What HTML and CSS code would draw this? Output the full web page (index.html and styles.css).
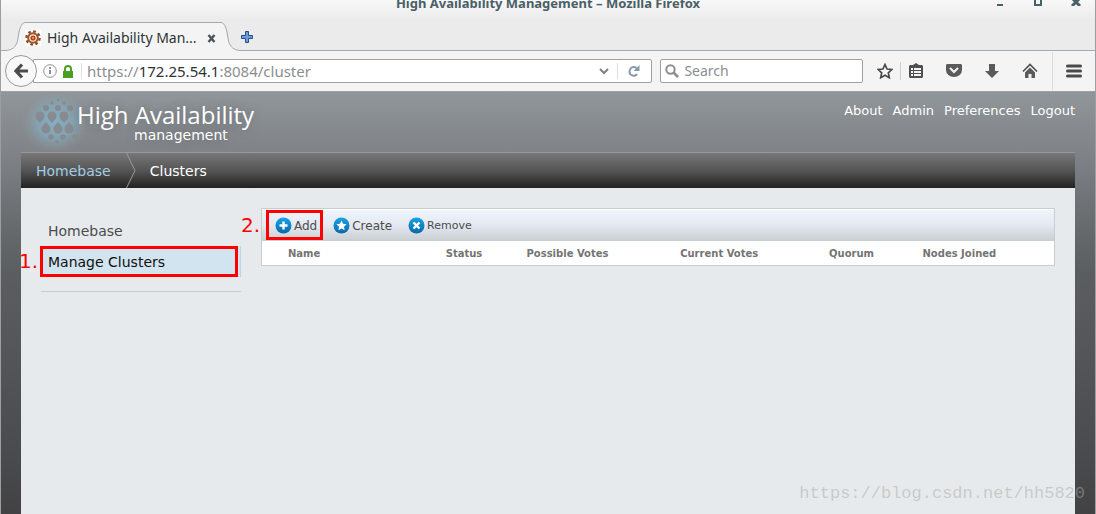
FILE: index.html
```
<!DOCTYPE html>
<html lang="en">
<head>
	<meta charset="utf-8">
	<title>High Availability Management</title>
	<link rel="stylesheet" href="styles.css">
</head>
<body>
	<div class="window">
		<div class="titlebar">
			<div class="window-title">High Availability Management – Mozilla Firefox</div>
			<div class="window-buttons">
				<button aria-label="Minimize"><svg width="10" height="12"><path d="M2 10h6v2H2z" fill="#4a5f67"/></svg></button>
				<button aria-label="Maximize"><svg width="10" height="12"><path d="M2 2h6v9H2z" fill="none" stroke="#4a5f67" stroke-width="2"/></svg></button>
				<button aria-label="Close"><svg width="10" height="12"><path d="M1 4l8 8M9 4l-8 8" stroke="#4a5f67" stroke-width="3"/></svg></button>
			</div>
		</div>

		<div class="tabs">
			<svg class="tab-edge" width="20" height="29" viewBox="0 0 20 29"><path d="M0 29V28.500C7 28.500 11 25 12.500 19L14.500 10C16 4 17 .5 20 .5V29z" fill="#f4f4f4"/><path d="M0 28.500C7 28.500 11 25 12.500 19L14 10C15.500 4 17 1 20 .5" fill="none" stroke="#a3aab0"/></svg>
			<div class="tab">
				<svg class="favicon" width="16" height="16" viewBox="0 0 16 16">
					<path d="M0 0h16v16H0z" fill="#fff"/>
					<circle cx="8" cy="8" r="6.600" fill="none" stroke="#8a4a26" stroke-width="2.400" stroke-dasharray="2.700 2.480"/>
					<circle cx="8" cy="8" r="4.800" fill="#fbe9dd" stroke="#95552f" stroke-width="2"/>
					<circle cx="8" cy="8" r="2.600" fill="#c3410d"/>
					<circle cx="8" cy="8" r="1" fill="#f6a05a"/>
				</svg>
				<span class="tab-text">High Availability Man...</span>
				<button aria-label="Close tab"><svg width="9" height="9"><path d="M1.500 1l6 7M7.500 1l-6 7" stroke="#4d5357" stroke-width="2.400"/></svg></button>
			</div>
			<svg class="tab-edge" width="20" height="29" viewBox="0 0 20 29"><path d="M20 29V28.500C13 28.500 9 25 7.500 19L5.500 10C4 4 3 .5 0 .5V29z" fill="#f4f4f4"/><path d="M20 28.500C13 28.500 9 25 7.500 19L6 10C4.500 4 3 1 0 .5" fill="none" stroke="#a3aab0"/></svg>
			<button class="new-tab" aria-label="New tab"><svg width="12" height="12"><path d="M4.500 .5h3v4h4v3h-4v4h-3v-4h-4v-3h4z" fill="#6f9bd8" stroke="#264d8c"/></svg></button>
		</div>

		<div class="navbar">
			<button class="back" aria-label="Back"><svg width="15" height="16" viewBox="0 0 15 16"><path d="M8 1.500L2 8l6 6.500M2.500 8H14" fill="none" stroke="#4b4b4b" stroke-width="3.200"/></svg></button>
			<div class="urlbar">
				<svg width="14" height="14" viewBox="0 0 14 14"><circle cx="7" cy="7" r="6.300" fill="none" stroke="#919191"/><path d="M6 6h2v4H6zM6 3h2v2H6z" fill="#919191"/></svg>
				<svg class="lock" width="10" height="13" viewBox="0 0 10 13"><path d="M0 6h10v7H0z" fill="#4a9e22"/><path d="M2 7V4a3 3 0 0 1 6 0v3" fill="none" stroke="#4a9e22" stroke-width="2"/></svg>
				<span class="url">https://<b>172.25.54.1</b>:8084/cluster</span>
				<svg class="chevron" width="10" height="7" viewBox="0 0 10 7"><path d="M1 1l4 4 4-4" fill="none" stroke="#818181" stroke-width="2"/></svg>
				<button class="reload" aria-label="Reload"><svg width="12" height="12" viewBox="0 0 12 12"><path d="M8.500 3C5 .5 1.500 3 1.500 6.500c0 4.500 6 5.500 7.500 2.500" fill="none" stroke="#8798a8" stroke-width="2"/><path d="M11.500 0v6h-6z" fill="#8798a8"/></svg></button>
			</div>
			<label class="search">
				<svg width="14" height="14" viewBox="0 0 14 14"><circle cx="5.500" cy="5.500" r="4.200" fill="none" stroke="#8e8e8e" stroke-width="2"/><path d="M8.500 8.500L13 13" stroke="#8e8e8e" stroke-width="2.600"/></svg>
				<input type="text" placeholder="Search" aria-label="Search">
			</label>
			<div class="tools">
				<button aria-label="Bookmark this page"><svg width="16" height="16" viewBox="0 0 16 16"><path d="M8 1.500l2 4.500 4.800.5-3.500 3.300 1 4.900L8 12.200l-4.300 2.500 1-4.900L1.200 6.500 6 6z" fill="#fafafa" stroke="#4a4a4a" stroke-width="1.700"/></svg></button>
				<button class="divided" aria-label="Bookmarks"><svg width="16" height="16" viewBox="0 0 16 16"><path d="M5 2l3-2 3 2h3l1 1v11l-1 1H2l-1-1V3l1-1z" fill="#505050"/><path d="M3 5h2v2H3zM6 5h7v2H6zM3 8h2v2H3zM6 8h7v2H6zM3 11h2v2H3zM6 11h7v2H6z" fill="#f4f4f4"/></svg></button>
				<button aria-label="Pocket"><svg width="16" height="16" viewBox="0 0 16 16"><path d="M0 2l1-1h14l1 1v5a8 7 0 0 1-16 0z" fill="#5a5a5a"/><path d="M4 5l4 4 4-4" fill="none" stroke="#f4f4f4" stroke-width="2"/></svg></button>
				<button aria-label="Downloads"><svg width="16" height="16" viewBox="0 0 16 16"><path d="M5 1h6v7h4l-7 7-7-7h4z" fill="#5a5a5a"/></svg></button>
				<button aria-label="Home"><svg width="16" height="16" viewBox="0 0 16 16"><path d="M1 8.500l7-7 7 7" fill="none" stroke="#505050" stroke-width="1.600"/><path d="M3 9.500l5-5 5 5V15H9.500v-4h-3v4H3z" fill="#5a5a5a"/></svg></button>
				<button class="menu" aria-label="Open menu"><svg width="16" height="16" viewBox="0 0 16 16"><path d="M1.500 3h13M1.500 8h13M1.500 13h13" stroke="#4a4a4a" stroke-width="3" stroke-linecap="round"/></svg></button>
			</div>
		</div>

		<div class="page">
			<header>
				<a class="logo" href="#">
					<svg class="drops" width="64" height="60" viewBox="0 0 64 60">
						<defs>
							<radialGradient id="glow">
								<stop offset="0" stop-color="#86aec1"/>
								<stop offset=".5" stop-color="#84a9bb" stop-opacity=".8"/>
								<stop offset="1" stop-color="#8a999f" stop-opacity="0"/>
							</radialGradient>
							<path id="drop" d="M0-6C2-3 4.500-2 4.500 1a4.500 4.500 0 0 1-9 0C-4.500-2-2-3 0-6z"/>
						</defs>
						<ellipse cx="34" cy="30" rx="34" ry="32" fill="url(#glow)"/>
						<g fill="#858b90">
							<circle cx="37" cy="8" r="1.200"/><circle cx="31" cy="11" r="1.800"/><circle cx="43" cy="11" r="1.800"/>
							<circle cx="25" cy="16" r="3"/><circle cx="37" cy="16" r="3"/><circle cx="49" cy="16" r="3"/>
							<circle cx="19" cy="24" r="4.500"/><circle cx="31" cy="24" r="4.500"/><circle cx="43" cy="24" r="4.500"/>
							<path d="M15 26l4 5 4-5zM27 26l4 5 4-5zM39 26l4 5 4-5z"/>
							<use href="#drop" x="25" y="36"/><use href="#drop" x="37" y="36"/><use href="#drop" x="48" y="36"/>
							<circle cx="30" cy="45" r="2.800"/><circle cx="42" cy="45" r="2.800"/><circle cx="54" cy="45" r="2.800"/>
							<circle cx="36" cy="50" r="1.800"/><circle cx="48" cy="50" r="1.800"/>
						</g>
					</svg>
					<span class="brand">
						<span class="brand-name">High Availability</span>
						<span class="brand-sub">management</span>
					</span>
				</a>
				<nav class="user-links">
					<a href="#">About</a>
					<a href="#">Admin</a>
					<a href="#">Preferences</a>
					<a href="#">Logout</a>
				</nav>
			</header>

			<nav class="breadcrumb">
				<a href="#">Homebase</a>
				<svg width="10" height="35" viewBox="0 0 10 35"><path d="M.5 0l8.500 17.500L.5 35" fill="none" stroke="#9a9a9a"/></svg>
				<span>Clusters</span>
			</nav>

			<main>
				<nav class="sidebar">
					<a href="#">Homebase</a>
					<a class="active" href="#">Manage Clusters</a>
					<span class="mark mark-one">1.</span>
				</nav>
				<section class="clusters">
					<div class="toolbar">
						<button>
							<svg width="17" height="17" viewBox="0 0 17 17"><circle cx="8.500" cy="8.500" r="8" fill="url(#blue)"/><path d="M8.500 4.500v8M4.500 8.500h8" stroke="#fff" stroke-width="2.400"/></svg>
							Add
						</button>
						<button>
							<svg width="17" height="17" viewBox="0 0 17 17"><circle cx="8.500" cy="8.500" r="8" fill="url(#blue)"/><path d="M8.500 3.500l1.500 3.200 3.500.5-2.500 2.500.6 3.500-3.100-1.600-3.100 1.600.6-3.500-2.500-2.500 3.500-.5z" fill="#fff"/></svg>
							Create
						</button>
						<button class="small">
							<svg width="17" height="17" viewBox="0 0 17 17"><circle cx="8.500" cy="8.500" r="8" fill="url(#blue)"/><path d="M5.500 5.500l6 6M11.500 5.500l-6 6" stroke="#fff" stroke-width="2.400"/></svg>
							Remove
						</button>
						<span class="mark mark-two">2.</span>
					</div>
					<table>
						<thead>
							<tr>
								<th class="name">Name</th>
								<th class="status">Status</th>
								<th class="possible">Possible Votes</th>
								<th class="current">Current Votes</th>
								<th class="quorum">Quorum</th>
								<th>Nodes Joined</th>
							</tr>
						</thead>
					</table>
				</section>
			</main>
		</div>
		<div class="watermark">https://blog.csdn.net/hh5820</div>
	</div>

	<svg class="defs" width="0" height="0">
		<linearGradient id="blue" x1="0" y1="0" x2="0" y2="1">
			<stop offset="0" stop-color="#1aa3e6"/>
			<stop offset="1" stop-color="#0a68a8"/>
		</linearGradient>
	</svg>
</body>
</html>
```
FILE: styles.css
```
* {
	box-sizing: border-box;
}
body {
	margin: 0;
	font-family: "DejaVu Sans", Verdana, sans-serif;
}
svg {
	display: block;
	flex: none;
}
button {
	display: flex;
	align-items: center;
	padding: 0;
	border: none;
	background: none;
	font: inherit;
	color: inherit;
	cursor: pointer;
}
a {
	color: inherit;
	text-decoration: none;
}
.defs {
	position: absolute;
}
.window {
	position: relative;
	display: flex;
	flex-direction: column;
	min-height: 100vh;
	overflow: hidden;
	border: solid #9c9e9f;
	border-width: 0 1px;
	background: linear-gradient(#f8f8f8, #ebebeb 20px);
}

/* browser */
.titlebar {
	display: grid;
	grid-template-columns: 1fr auto 1fr;
	height: 22px;
	font: bold 13px/6px "Noto Sans", sans-serif;
	color: #4a5f67;
}
.window-title {
	grid-column: 2;
}
.window-buttons {
	display: flex;
	justify-content: flex-end;
	gap: 28px;
	padding-right: 14px;
	height: 6px;
	align-items: flex-end;
}
.window-buttons button {
	height: 12px;
}
.tabs {
	display: flex;
	height: 29px;
	padding-left: 4px;
	font: 14px/18px "Noto Sans", sans-serif;
	color: #2e3436;
	background: linear-gradient(#a3aab0, #a3aab0) bottom / 100% 1px no-repeat;
}
.tab {
	display: flex;
	align-items: center;
	width: 196px;
	padding-top: 2px;
	background: #f4f4f4;
	border-top: 1px solid #a3aab0;
}
.tab-text {
	flex: 1;
	padding-left: 6px;
	white-space: nowrap;
}
.tab button {
	padding-right: 5px;
}
.new-tab {
	padding: 0;
}
.navbar {
	display: flex;
	align-items: center;
	height: 41px;
	padding-left: 4px;
	font: 14px/20px "Noto Sans", sans-serif;
	background: #f4f4f4;
	border-bottom: 1px solid #9c9e9f;
}
.back {
	justify-content: center;
	width: 32px;
	height: 32px;
	border: 1px solid #999;
	border-radius: 50%;
	background: #f8f8f8;
	z-index: 1;
}
.urlbar {
	flex: 622;
	display: flex;
	align-items: center;
	height: 24px;
	margin-left: -4px;
	padding-left: 9px;
	background: #fff;
	border: 1px solid #a0a0a0;
	border-radius: 0 2px 2px 0;
}
.lock {
	margin: 0 8px 0 6px;
}
.url {
	flex: 1;
	padding-left: 5px;
	border-left: 1px solid #ddd;
	font-size: 15px;
	line-height: 16px;
	color: #8b8e90;
}
.url b {
	font-weight: normal;
	color: #2e3436;
}
.chevron {
	margin-right: 8px;
}
.reload {
	height: 16px;
	padding: 0 11px 0 10px;
	border-left: 1px solid #ddd;
}
.search {
	flex: 201;
	display: flex;
	align-items: center;
	gap: 5px;
	height: 24px;
	margin-left: 8px;
	padding-left: 4px;
	background: #fff;
	border: 1px solid #a0a0a0;
	border-radius: 2px;
}
.search input {
	width: 100%;
	min-width: 0;
	padding: 0;
	border: none;
	outline: none;
	font: inherit;
	background: none;
}
.search input::placeholder {
	color: #8b8e90;
	opacity: 1;
}
.tools {
	display: flex;
	align-items: center;
	height: 38px;
	padding-left: 14px;
	gap: 22px;
}
.tools .divided {
	margin-left: -15px;
	padding-left: 7px;
	border-left: 1px solid #d0d0d0;
	height: 18px;
}
.tools .menu {
	height: 100%;
	margin-left: -8px;
	padding: 0 13px;
	border-left: 1px solid #ddd;
}

/* application */
.page {
	flex: 1;
	display: flex;
	flex-direction: column;
	padding: 0 20px;
	background: linear-gradient(#90969a, #808387 60px, #717478 103px, #5b5e60 180px, #4a4b4e 360px, #424244 422px);
}
header {
	display: flex;
	justify-content: space-between;
	height: 60px;
	color: #fff;
}
.logo {
	display: flex;
}
.brand {
	display: flex;
	flex-direction: column;
	margin-left: -8px;
	padding-top: 10px;
	font-family: "Open Sans", sans-serif;
	text-shadow: 0 0 8px rgba(90, 95, 100, 0.6);
}
.brand-name {
	font-size: 24px;
	line-height: 26px;
}
.brand-sub {
	padding-left: 57px;
	font: 14px/14px "DejaVu Sans", sans-serif;
}
.user-links {
	display: flex;
	gap: 10px;
	padding-top: 10px;
	font-size: 13px;
	line-height: 18px;
}
.breadcrumb {
	display: flex;
	align-items: center;
	height: 36px;
	padding-left: 15px;
	font-size: 14px;
	color: #fff;
	background: linear-gradient(#777, #555 50%, #222);
	border-top: 1px solid #999;
}
.breadcrumb a {
	color: #a3cde2;
}
.breadcrumb svg {
	margin: 0 14px 0 15px;
}
main {
	flex: 1;
	display: flex;
	align-items: flex-start;
	gap: 20px;
	padding: 20px;
	background: #e6eaed;
}
.sidebar {
	position: relative;
	width: 200px;
	padding: 7px 0 14px;
	font-size: 14px;
	line-height: 29px;
	color: #4c4c4c;
	border-bottom: 1px solid #c8cdd0;
}
.sidebar a {
	display: block;
	padding: 2px 0 0 7px;
}
.sidebar .active {
	color: #111;
	background: #d2e4ef;
	border-right: 1px solid #bcd5e2;
}
.clusters {
	flex: 1;
	border: 1px solid #c8cdd0;
	background: #fff;
}
.toolbar {
	position: relative;
	display: flex;
	align-items: center;
	gap: 16px;
	height: 32px;
	padding-left: 13px;
	font-size: 12px;
	color: #4c4c4c;
	background: linear-gradient(#eff3fc, #e3e8f1 50%, #c9ced1);
	border-top: 1px solid #fff;
}
.toolbar button {
	gap: 2px;
}
.toolbar .small {
	font-size: 11px;
}
table {
	width: 100%;
	table-layout: fixed;
	border-collapse: collapse;
	font-size: 10px;
	line-height: 22px;
	color: #747474;
}
th {
	padding: 2px 0 0;
	text-align: left;
	white-space: nowrap;
}
th.name {
	width: 23.2%;
	padding-left: 26px;
}
th.status {
	width: 10.2%;
}
th.possible {
	width: 19.4%;
}
th.current {
	width: 18.8%;
}
th.quorum {
	width: 11.8%;
}

/* red step marks over the page */
.mark {
	position: absolute;
	border: 3px solid #f00;
	color: #f00;
	font-size: 20px;
	line-height: 24px;
	text-indent: -24px;
	white-space: nowrap;
	pointer-events: none;
}
.mark-one {
	left: -1px;
	top: 38px;
	width: 198px;
	height: 31px;
}
.mark-two {
	left: 4px;
	top: 0;
	width: 57px;
	height: 30px;
	text-indent: -28px;
}
.watermark {
	position: absolute;
	right: 10px;
	bottom: 10px;
	font: 17px/20px "Liberation Mono", monospace;
	color: rgba(170, 170, 165, 0.5);
}
```
